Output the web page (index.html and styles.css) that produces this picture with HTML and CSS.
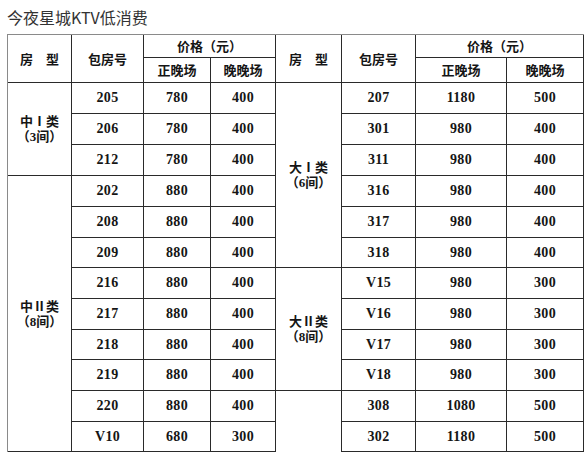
FILE: index.html
```html
<!DOCTYPE html>
<html lang="zh-CN">
<head>
<meta charset="utf-8">
<title>今夜星城KTV低消费</title>
<link rel="stylesheet" href="styles.css">
</head>
<body>
<div class="page">
  <h1 class="title">今夜星城KTV低消费</h1>
  <table class="price">
    <colgroup>
      <col class="c1"><col class="c2"><col class="c3"><col class="c4">
      <col class="c5"><col class="c6"><col class="c7"><col class="c8">
    </colgroup>
    <thead>
      <tr class="ha">
        <th rowspan="2">房　型</th>
        <th rowspan="2">包房号</th>
        <th colspan="2">价格（元）</th>
        <th rowspan="2">房　型</th>
        <th rowspan="2">包房号</th>
        <th colspan="2">价格（元）</th>
      </tr>
      <tr class="hb">
        <th>正晚场</th><th>晚晚场</th>
        <th>正晚场</th><th>晚晚场</th>
      </tr>
    </thead>
    <tbody>
      <tr class="r31">
        <td rowspan="3" class="type"><span class="line">中Ⅰ类</span><span class="line">（3间）</span></td>
        <td>205</td><td>780</td><td>400</td>
        <td rowspan="6" class="type"><span class="line">大Ⅰ类</span><span class="line">（6间）</span></td>
        <td>207</td><td>1180</td><td>500</td>
      </tr>
      <tr class="r31"><td>206</td><td>780</td><td>400</td><td>301</td><td>980</td><td>400</td></tr>
      <tr class="r31"><td>212</td><td>780</td><td>400</td><td>311</td><td>980</td><td>400</td></tr>
      <tr class="r31">
        <td rowspan="9" class="type"><span class="line">中Ⅱ类</span><span class="line">（8间）</span></td>
        <td>202</td><td>880</td><td>400</td>
        <td>316</td><td>980</td><td>400</td>
      </tr>
      <tr class="r31"><td>208</td><td>880</td><td>400</td><td>317</td><td>980</td><td>400</td></tr>
      <tr class="r30"><td>209</td><td>880</td><td>400</td><td>318</td><td>980</td><td>400</td></tr>
      <tr class="r31">
        <td>216</td><td>880</td><td>400</td>
        <td rowspan="4" class="type"><span class="line">大Ⅱ类</span><span class="line">（8间）</span></td>
        <td>V15</td><td>980</td><td>300</td>
      </tr>
      <tr class="r31"><td>217</td><td>880</td><td>400</td><td>V16</td><td>980</td><td>300</td></tr>
      <tr class="r30"><td>218</td><td>880</td><td>400</td><td>V17</td><td>980</td><td>300</td></tr>
      <tr class="r31"><td>219</td><td>880</td><td>400</td><td>V18</td><td>980</td><td>300</td></tr>
      <tr class="r31">
        <td>220</td><td>880</td><td>400</td>
        <td rowspan="2" class="type open"></td>
        <td>308</td><td>1080</td><td>500</td>
      </tr>
      <tr class="r30"><td>V10</td><td>680</td><td>300</td><td>302</td><td>1180</td><td>500</td></tr>
    </tbody>
  </table>
</div>
</body>
</html>
```

FILE: styles.css
```css
html, body {
  margin: 0;
  padding: 0;
  background: #ffffff;
}

.page {
  padding: 6px 0 0 7px;
}

.title {
  margin: 0 0 6px 0;
  font-family: "Noto Sans CJK SC", "Noto Sans", sans-serif;
  font-size: 16px;
  font-weight: 400;
  line-height: 22px;
  color: #333333;
}

.price {
  border-collapse: separate;
  border-spacing: 0;
  table-layout: fixed;
  width: 577px;
  border-top: 1px solid #8a8a8a;
  border-left: 1px solid #8a8a8a;
  color: #151515;
}

.c1 { width: 64px; }
.c2 { width: 72px; }
.c3 { width: 67px; }
.c4 { width: 65px; }
.c5 { width: 66px; }
.c6 { width: 74px; }
.c7 { width: 91px; }
.c8 { width: 77px; }

.price th,
.price td {
  padding: 0;
  border-right: 1px solid #2a2a2a;
  border-bottom: 1px solid #2a2a2a;
  text-align: center;
  vertical-align: middle;
  box-sizing: border-box;
}

.price th {
  font-family: "Noto Sans CJK SC", sans-serif;
  font-size: 13px;
  font-weight: 700;
  line-height: 16px;
}

.price td {
  font-family: "Liberation Serif", serif;
  font-size: 14px;
  font-weight: 700;
  line-height: 16px;
  letter-spacing: 0.3px;
}

.price td.type {
  font-family: "Liberation Serif", "Noto Sans CJK SC", serif;
  font-size: 13px;
  line-height: 15px;
  letter-spacing: 0;
}

.line {
  display: block;
  white-space: nowrap;
}

.price td.open {
  border-bottom: none;
}

.ha { height: 23px; }
.hb { height: 25px; }
.r31 { height: 31px; }
.r30 { height: 30px; }
```
